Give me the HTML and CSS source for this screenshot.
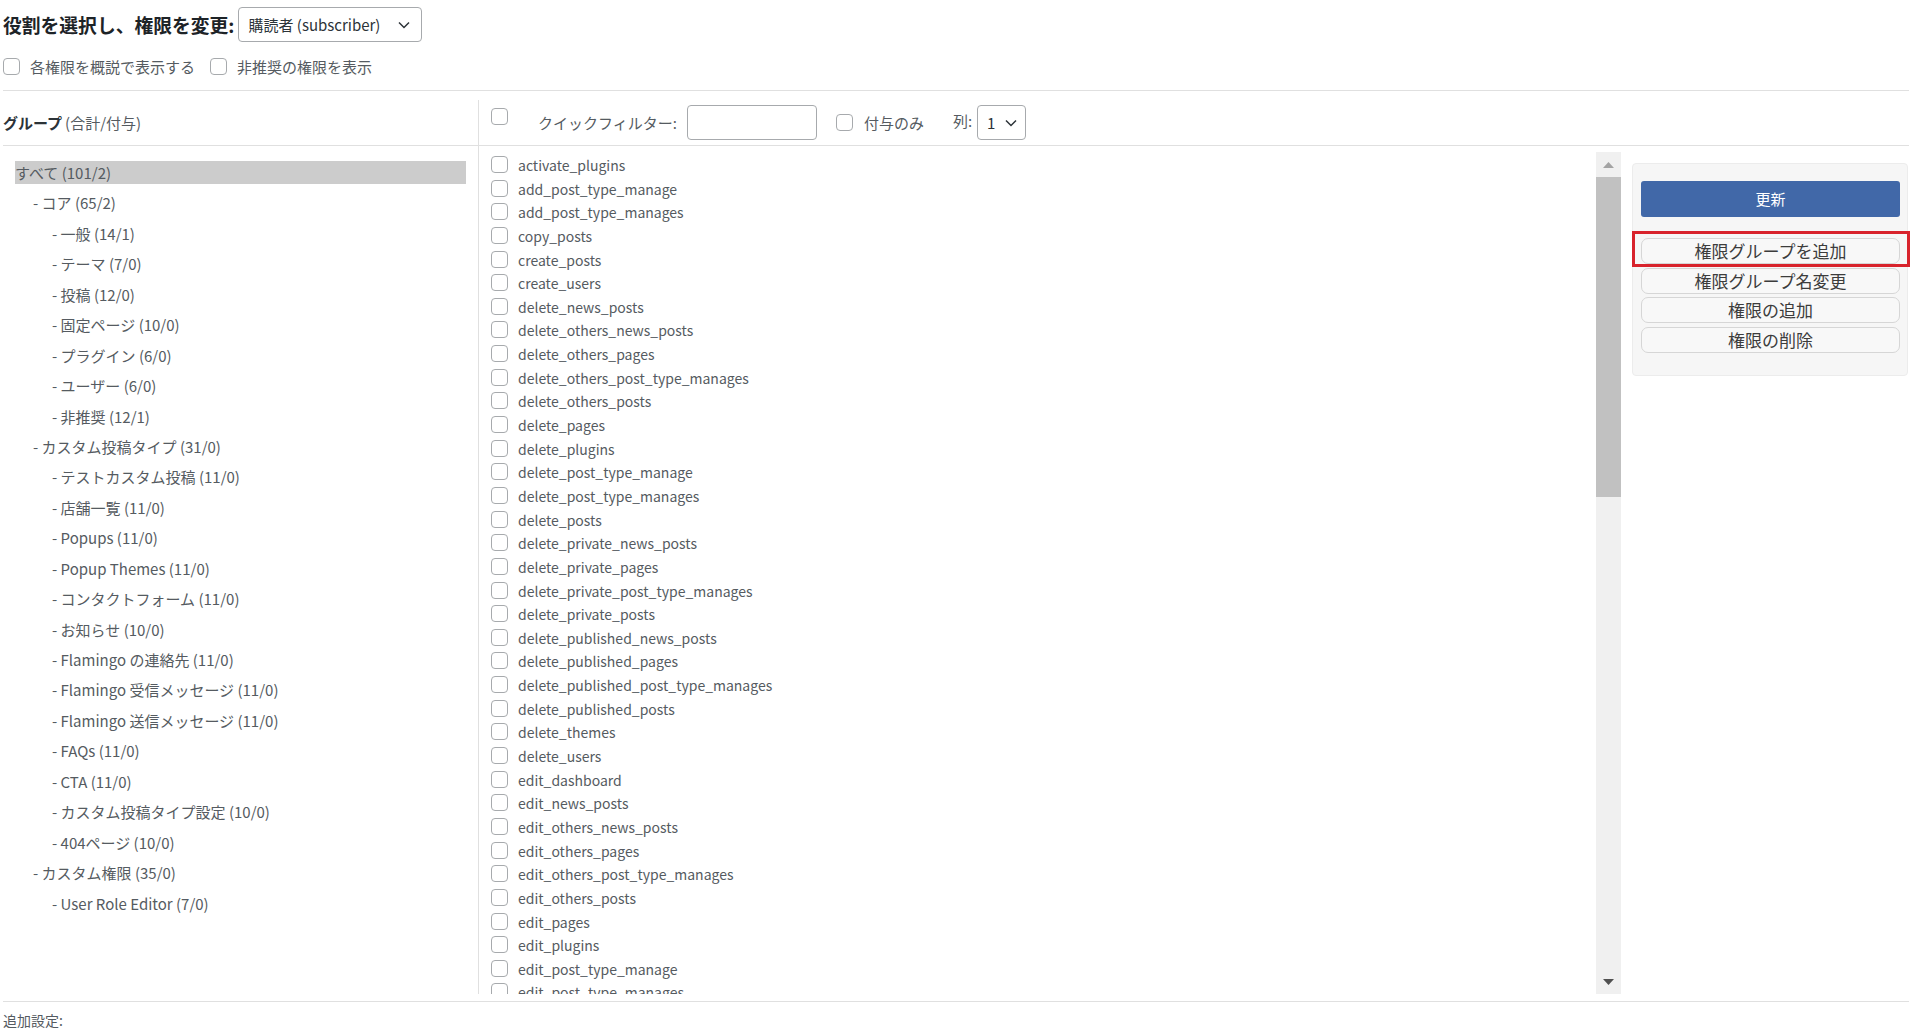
FILE: index.html
```html
<!DOCTYPE html>
<html lang="ja">
<head>
    <meta charset="UTF-8">
    <meta name="viewport" content="width=device-width, initial-scale=1.0">
    <title>User Role Editor</title>
    <link rel="stylesheet" href="styles.css">
</head>
<body>
    <div class="wrap">
        <div class="role-row">
            <span class="role-title">役割を選択し、権限を変更:</span>
            <div class="select role-select">
                <span>購読者 (subscriber)</span>
                <svg class="chevron" width="12" height="8" viewBox="0 0 12 8"><path d="M1 1.5l5 5 5-5" fill="none" stroke="#2c3338" stroke-width="1.5"/></svg>
            </div>
        </div>

        <div class="options">
            <label class="check"><input type="checkbox">各権限を概説で表示する</label>
            <label class="check"><input type="checkbox">非推奨の権限を表示</label>
        </div>

        <div class="editor">
            <div class="groups-head"><b>グループ</b> (合計/付与)</div>
            <div class="toolbar">
                <input type="checkbox" class="select-all">
                <span class="filter-label">クイックフィルター:</span>
                <input type="text" class="filter-input">
                <label class="check granted"><input type="checkbox">付与のみ</label>
                <span class="cols-label">列:</span>
                <div class="select cols-select">
                    <span>1</span>
                    <svg class="chevron" width="12" height="8" viewBox="0 0 12 8"><path d="M1 1.5l5 5 5-5" fill="none" stroke="#2c3338" stroke-width="1.5"/></svg>
                </div>
            </div>

            <ul class="groups">
                <li class="group active">すべて (101/2)</li>
                <li class="group level-1">- コア (65/2)</li>
                <li class="group level-2">- 一般 (14/1)</li>
                <li class="group level-2">- テーマ (7/0)</li>
                <li class="group level-2">- 投稿 (12/0)</li>
                <li class="group level-2">- 固定ページ (10/0)</li>
                <li class="group level-2">- プラグイン (6/0)</li>
                <li class="group level-2">- ユーザー (6/0)</li>
                <li class="group level-2">- 非推奨 (12/1)</li>
                <li class="group level-1">- カスタム投稿タイプ (31/0)</li>
                <li class="group level-2">- テストカスタム投稿 (11/0)</li>
                <li class="group level-2">- 店舗一覧 (11/0)</li>
                <li class="group level-2">- Popups (11/0)</li>
                <li class="group level-2">- Popup Themes (11/0)</li>
                <li class="group level-2">- コンタクトフォーム (11/0)</li>
                <li class="group level-2">- お知らせ (10/0)</li>
                <li class="group level-2">- Flamingo の連絡先 (11/0)</li>
                <li class="group level-2">- Flamingo 受信メッセージ (11/0)</li>
                <li class="group level-2">- Flamingo 送信メッセージ (11/0)</li>
                <li class="group level-2">- FAQs (11/0)</li>
                <li class="group level-2">- CTA (11/0)</li>
                <li class="group level-2">- カスタム投稿タイプ設定 (10/0)</li>
                <li class="group level-2">- 404ページ (10/0)</li>
                <li class="group level-1">- カスタム権限 (35/0)</li>
                <li class="group level-2">- User Role Editor (7/0)</li>
            </ul>

            <div class="caps-box">
                <div class="caps">
                    <label class="cap"><input type="checkbox"><span>activate_plugins</span></label>
                    <label class="cap"><input type="checkbox"><span>add_post_type_manage</span></label>
                    <label class="cap"><input type="checkbox"><span>add_post_type_manages</span></label>
                    <label class="cap"><input type="checkbox"><span>copy_posts</span></label>
                    <label class="cap"><input type="checkbox"><span>create_posts</span></label>
                    <label class="cap"><input type="checkbox"><span>create_users</span></label>
                    <label class="cap"><input type="checkbox"><span>delete_news_posts</span></label>
                    <label class="cap"><input type="checkbox"><span>delete_others_news_posts</span></label>
                    <label class="cap"><input type="checkbox"><span>delete_others_pages</span></label>
                    <label class="cap"><input type="checkbox"><span>delete_others_post_type_manages</span></label>
                    <label class="cap"><input type="checkbox"><span>delete_others_posts</span></label>
                    <label class="cap"><input type="checkbox"><span>delete_pages</span></label>
                    <label class="cap"><input type="checkbox"><span>delete_plugins</span></label>
                    <label class="cap"><input type="checkbox"><span>delete_post_type_manage</span></label>
                    <label class="cap"><input type="checkbox"><span>delete_post_type_manages</span></label>
                    <label class="cap"><input type="checkbox"><span>delete_posts</span></label>
                    <label class="cap"><input type="checkbox"><span>delete_private_news_posts</span></label>
                    <label class="cap"><input type="checkbox"><span>delete_private_pages</span></label>
                    <label class="cap"><input type="checkbox"><span>delete_private_post_type_manages</span></label>
                    <label class="cap"><input type="checkbox"><span>delete_private_posts</span></label>
                    <label class="cap"><input type="checkbox"><span>delete_published_news_posts</span></label>
                    <label class="cap"><input type="checkbox"><span>delete_published_pages</span></label>
                    <label class="cap"><input type="checkbox"><span>delete_published_post_type_manages</span></label>
                    <label class="cap"><input type="checkbox"><span>delete_published_posts</span></label>
                    <label class="cap"><input type="checkbox"><span>delete_themes</span></label>
                    <label class="cap"><input type="checkbox"><span>delete_users</span></label>
                    <label class="cap"><input type="checkbox"><span>edit_dashboard</span></label>
                    <label class="cap"><input type="checkbox"><span>edit_news_posts</span></label>
                    <label class="cap"><input type="checkbox"><span>edit_others_news_posts</span></label>
                    <label class="cap"><input type="checkbox"><span>edit_others_pages</span></label>
                    <label class="cap"><input type="checkbox"><span>edit_others_post_type_manages</span></label>
                    <label class="cap"><input type="checkbox"><span>edit_others_posts</span></label>
                    <label class="cap"><input type="checkbox"><span>edit_pages</span></label>
                    <label class="cap"><input type="checkbox"><span>edit_plugins</span></label>
                    <label class="cap"><input type="checkbox"><span>edit_post_type_manage</span></label>
                    <label class="cap"><input type="checkbox"><span>edit_post_type_manages</span></label>
                </div>
                <div class="scrollbar">
                    <div class="scroll-btn">
                        <svg width="11" height="6" viewBox="0 0 11 6"><path d="M0 6L5.5 0 11 6z" fill="#a3a3a3"/></svg>
                    </div>
                    <div class="scroll-thumb"></div>
                    <div class="scroll-track"></div>
                    <div class="scroll-btn">
                        <svg width="11" height="6" viewBox="0 0 11 6"><path d="M0 0h11L5.5 6z" fill="#505050"/></svg>
                    </div>
                </div>
            </div>

            <div class="side">
                <div class="panel">
                    <button class="btn primary">更新</button>
                    <div class="btn-list">
                        <div class="marked">
                            <button class="btn">権限グループを追加</button>
                            <span class="highlight"></span>
                        </div>
                        <button class="btn">権限グループ名変更</button>
                        <button class="btn">権限の追加</button>
                        <button class="btn">権限の削除</button>
                    </div>
                </div>
            </div>
        </div>

        <div class="footer">追加設定:</div>
    </div>
</body>
</html>
```

FILE: styles.css
```css
body {
    margin: 0;
    font-family: "Noto Sans CJK JP", "Noto Sans", sans-serif;
    font-size: 15px;
    color: #555b61;
    background: #fff;
}

.wrap {
    padding: 0 11px 0 3px;
}

/* role selector */

.role-row {
    display: flex;
    align-items: center;
    gap: 4px;
    padding-top: 7px;
}

.role-title {
    font-size: 18.8px;
    font-weight: bold;
    color: #1d2327;
}

.select {
    display: flex;
    align-items: center;
    justify-content: space-between;
    box-sizing: border-box;
    height: 35px;
    border: 1px solid #a7aaad;
    border-radius: 4px;
    background: #fff;
    color: #2c3338;
    font-size: 15px;
}

.role-select {
    width: 184px;
    padding: 0 11px 0 9px;
}

.cols-select {
    width: 49px;
    padding: 0 8px 0 9px;
}

/* checkboxes */

input[type="checkbox"] {
    appearance: none;
    box-sizing: border-box;
    width: 17px;
    height: 17px;
    margin: 0;
    border: 1px solid #a7aaad;
    border-radius: 4px;
    background: #fff;
    flex-shrink: 0;
}

.check {
    display: flex;
    align-items: center;
    gap: 10px;
}

.options {
    display: flex;
    gap: 15px;
    height: 22px;
    align-items: center;
    margin-top: 13px;
    margin-bottom: 13px;
}

/* editor table */

.editor {
    display: grid;
    grid-template-columns: 476px 1142px 1fr;
    grid-template-rows: 46px 848px;
    border-top: 1px solid #e0e0e0;
    padding-top: 9px;
}

.groups-head {
    display: flex;
    align-items: center;
    border-right: 1px solid #e0e0e0;
    border-bottom: 1px solid #e0e0e0;
}

.groups-head b {
    color: #2c3338;
    margin-right: 3px;
}

.toolbar {
    grid-column: 2 / 4;
    display: flex;
    align-items: center;
    padding-left: 12px;
    border-bottom: 1px solid #e0e0e0;
}

.select-all {
    align-self: flex-start;
    margin-top: 8px !important;
}

.filter-label {
    margin-left: 30px;
    margin-right: 10px;
}

.filter-input {
    box-sizing: border-box;
    width: 130px;
    height: 35px;
    margin: 0;
    border: 1px solid #a7aaad;
    border-radius: 4px;
}

.granted {
    margin-left: 19px;
    gap: 11px;
}

.cols-label {
    margin-left: 29px;
    margin-right: 5px;
    margin-top: -5px;
}

/* groups tree */

.groups {
    list-style: none;
    margin: 0;
    padding: 15px 12px 0 12px;
    border-right: 1px solid #e0e0e0;
}

.group {
    height: 23px;
    line-height: 23px;
    margin-bottom: 7.45px;
    white-space: nowrap;
}

.group.active {
    background: #cccccc;
}

.group.level-1 {
    padding-left: 18px;
}

.group.level-2 {
    padding-left: 37px;
}

/* capabilities list */

.caps-box {
    display: flex;
    margin-top: 6px;
    height: 842px;
}

.caps {
    flex: 1;
    overflow: hidden;
    padding: 4px 0 0 12px;
    font-size: 14px;
}

.cap {
    display: flex;
    align-items: flex-start;
    gap: 10px;
    height: 23.65px;
    line-height: 23.65px;
}

.cap span {
    margin-top: -2px;
}

.scrollbar {
    display: flex;
    flex-direction: column;
    width: 25px;
    background: #f0f0f0;
}

.scroll-btn {
    display: flex;
    align-items: center;
    justify-content: center;
    height: 25px;
}

.scroll-thumb {
    height: 320px;
    background: #c1c1c1;
}

.scroll-track {
    flex: 1;
}

/* side panel */

.side {
    padding: 17px 1px 0 11px;
}

.panel {
    box-sizing: border-box;
    height: 213px;
    padding: 17px 7px 0 8px;
    background: #f6f6f6;
    border: 1px solid #ececec;
    border-radius: 4px;
}

.btn {
    display: block;
    width: 100%;
    box-sizing: border-box;
    height: 26px;
    padding: 0;
    border: 1px solid #d6d6d6;
    border-radius: 7px;
    background: #f8f8f8;
    color: #3c3c3c;
    font-family: inherit;
    font-size: 17px;
    line-height: 24px;
}

.btn.primary {
    height: 36px;
    border: none;
    border-radius: 3px;
    background: #4168a8;
    color: #fff;
    font-size: 15px;
}

.btn-list {
    display: flex;
    flex-direction: column;
    gap: 3.7px;
    margin-top: 21px;
}

.marked {
    position: relative;
}

.highlight {
    position: absolute;
    left: -9px;
    right: -10px;
    top: -7px;
    bottom: -3px;
    border: 3px solid #d8232c;
}

/* footer */

.footer {
    margin-top: 7px;
    border-top: 1px solid #e0e0e0;
    padding-top: 8px;
    font-size: 14px;
    line-height: 20px;
}
```
